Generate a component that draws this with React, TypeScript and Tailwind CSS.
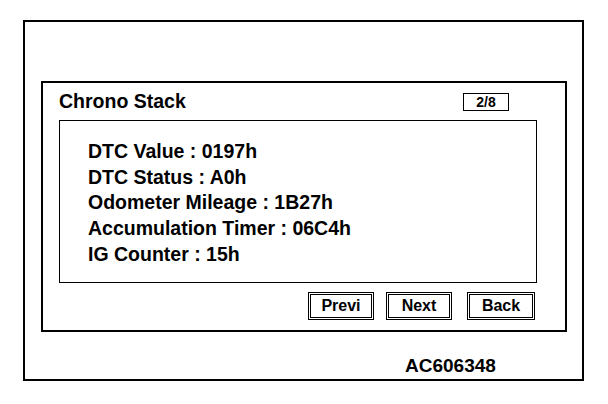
import React from "react";

const font = { fontFamily: '"Liberation Sans", Arial, sans-serif' };

function Btn({ label, w }: { label: string; w: string }) {
  return (
    <div className={`border border-black p-px ${w} h-[28px]`}>
      <div className="border border-black w-full h-full flex items-center justify-center text-[16px] font-bold leading-none">
        {label}
      </div>
    </div>
  );
}

export default function App() {
  const lines = [
    "DTC Value : 0197h",
    "DTC Status : A0h",
    "Odometer Mileage : 1B27h",
    "Accumulation Timer : 06C4h",
    "IG Counter : 15h",
  ];
  return (
    <div className="w-[608px] h-[404px] bg-white text-black pt-[20px] pl-[23px]" style={font}>
      <div className="w-[561px] h-[361px] border-2 border-black flex flex-col pl-[16px] pt-[59px]">
        <div className="w-[526px] h-[251px] border-2 border-black flex flex-col pl-[16px]">
          <div className="h-[37px] flex items-center justify-between pr-[56px]">
            <div className="text-[19.5px] font-bold leading-none">Chrono Stack</div>
            <div className="w-[46px] h-[18px] border border-black flex items-center justify-center text-[14px] font-bold leading-none">
              2/8
            </div>
          </div>
          <div className="w-[478px] h-[163px] border border-black flex flex-col pl-[28px] pt-[18px]">
            {lines.map((l) => (
              <div key={l} className="h-[25.7px] flex items-center text-[19.5px] font-bold leading-none">
                {l}
              </div>
            ))}
          </div>
          <div className="flex justify-end w-[478px] mt-[9px] pr-[2px]">
            <Btn label="Previ" w="w-[66px]" />
            <div className="w-[12px]" />
            <Btn label="Next" w="w-[66px]" />
            <div className="w-[15px]" />
            <Btn label="Back" w="w-[68px]" />
          </div>
        </div>
        <div className="pl-[364px] pt-[24px] text-[19px] font-bold leading-none">AC606348</div>
      </div>
    </div>
  );
}
